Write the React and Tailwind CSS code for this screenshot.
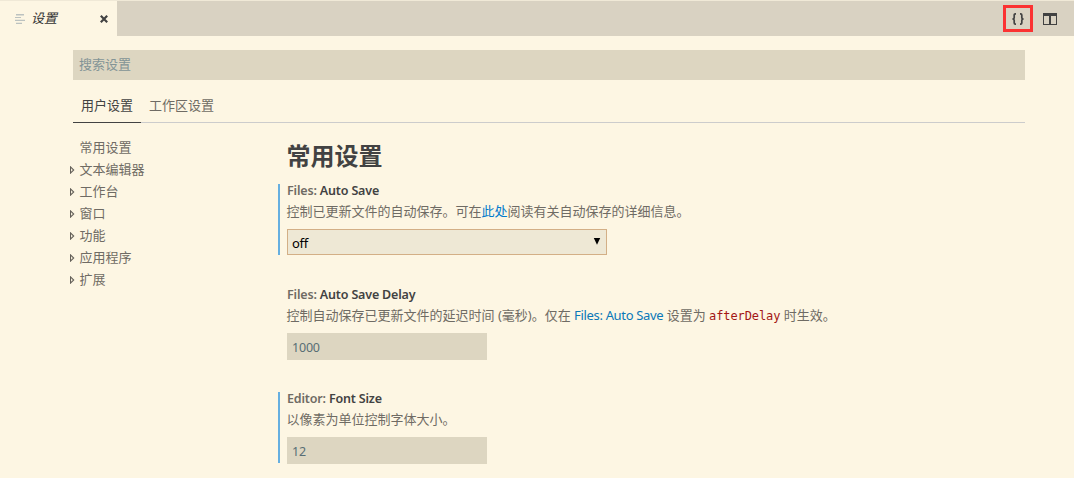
const latin = "font-['Noto_Sans','Noto_Sans_CJK_SC',sans-serif]";

function Tree() {
  const items = ['常用设置', '文本编辑器', '工作台', '窗口', '功能', '应用程序', '扩展'];
  return (
    <ul className="mt-[13px] w-[205px] shrink-0 text-[13px] leading-[22px] text-[#6f6b64]">
      {items.map((t, i) => (
        <li key={t} className="flex h-[22px] items-center">
          <span className="flex w-[6.5px] shrink-0 -translate-x-[3px] translate-y-[1px]">
            {i > 0 && (
              <svg width="5" height="8" viewBox="0 0 5 8" className="shrink-0" fill="none" stroke="#646059" strokeWidth="1.1">
                <path d="M0.5 0.9 L3.7 4 L0.5 7.1 Z" />
              </svg>
            )}
          </span>
          {t}
        </li>
      ))}
    </ul>
  );
}

function Setting({ group, name, modified, className, children }) {
  return (
    <section className={'flex h-[71px] ' + className}>
      <div className={'w-[2px] shrink-0 ' + (modified ? 'bg-[#66afe0]' : '')} />
      <div className="ml-[7px] text-[13px] text-[#6f6b64]">
        <h2 className="h-[17px] whitespace-nowrap text-[12.5px] leading-[14px] font-semibold tracking-[-0.17px]">
          {group}: <span className="text-[#424242]">{name}</span>
        </h2>
        {children}
      </div>
    </section>
  );
}

function Description({ children }) {
  return <p className="mb-[8px] -ml-[0.5px] h-[20px] whitespace-nowrap leading-[20px]">{children}</p>;
}

function NumberBox({ value }) {
  return (
    <div className="h-[27px] w-[200px] bg-[#ddd6c1] pl-[5px] text-[12.5px] leading-[29px] tracking-[-0.2px] text-[#586e75]">
      {value}
    </div>
  );
}

export default function App() {
  return (
    <div className={'h-[478px] w-[1074px] overflow-hidden bg-[#fdf6e3] ' + latin}>
      <header className="flex h-[36px] border-t border-[#f0e9d7] bg-[#d9d2c2]">
        <div className="flex w-[117px] items-center bg-[#fdf6e3] pl-[15px]">
          <svg width="10" height="10" viewBox="0 0 10 10" className="shrink-0" fill="#bcc2c0">
            <path d="M1 0h8v1.4H1zM0 2.9h6v1.2H0zM0 5.8h10v1.3H0zM1 8.7h6v1.3H1z" />
          </svg>
          <span className="ml-[6px] text-[13px] italic text-[#333333]">设置</span>
          <svg width="8" height="8" viewBox="0 0 8 8" className="ml-[43px] shrink-0" stroke="#424242" strokeWidth="2.2">
            <path d="M0.8 0.8L7.2 7.2M7.2 0.8L0.8 7.2" />
          </svg>
        </div>
        <div className="ml-auto flex items-start pt-[4px] pr-[17px]">
          <div className="flex h-[27px] w-[30px] items-center justify-center border-3 border-[#fb3232]">
            <svg width="12" height="12" viewBox="0 0 12 12" fill="none" stroke="#424242" strokeWidth="1.7">
              <path d="M4 0.9H3.4Q2.2 0.9 2.2 2.1V4.4Q2.2 6 0.4 6Q2.2 6 2.2 7.6V9.9Q2.2 11.1 3.4 11.1H4M8 0.9H8.6Q9.8 0.9 9.8 2.1V4.4Q9.8 6 11.6 6Q9.8 6 9.8 7.6V9.9Q9.8 11.1 8.6 11.1H8" />
            </svg>
          </div>
          <svg width="14" height="12" viewBox="0 0 14 12" className="mt-[8px] ml-[10px]" fill="#424242" fillRule="evenodd">
            <path d="M0 0H14V12H0ZM1 3V11H6V3ZM8 3V11H13V3Z" />
          </svg>
        </div>
      </header>

      <main className="mx-[73px] w-[952px] pt-[14px]">
        <div className="h-[30px] bg-[#ddd6c1] pl-[6px] text-[13px] leading-[29px] text-[#839496]">搜索设置</div>
        <nav className="mt-[10px] flex h-[33px] border-b border-[#cccccc] text-[13px] leading-[30px] text-[#6f6b64]">
          <div className="h-[33px] w-[68px] border-b border-[#424242] pl-[8px] text-[#424242]">用户设置</div>
          <div className="pl-[8px]">工作区设置</div>
        </nav>

        <div className="flex">
          <Tree />
          <div className="min-w-0 flex-1">
            <h1 className="mt-[15px] mb-[10px] ml-[8.5px] h-[36px] text-[24px] leading-[36px] font-bold text-[#424242]">常用设置</h1>
            <Setting group="Files" name="Auto Save" modified className="">
              <Description>
                控制已更新文件的自动保存。可在<a className="text-[#007acc]">此处</a>阅读有关自动保存的详细信息。
              </Description>
              <div className="flex h-[26px] w-[320px] items-center justify-between border border-[#d3af86] bg-[#eee8d5] pr-[5px] pl-[4px] text-black">
                <span className="pt-[4px] tracking-[-0.3px]">off</span>
                <svg width="8" height="7" viewBox="0 0 8 7" className="mb-[2px]">
                  <path d="M0.8 0H7.2L4 6.8Z" />
                </svg>
              </div>
            </Setting>
            <Setting group="Files" name="Auto Save Delay" className="mt-[33px]">
              <Description>
                控制自动保存已更新文件的延迟时间 (毫秒)。仅在{' '}
                <a className="tracking-[-0.33px] text-[#0a78b8]">Files: Auto Save</a> 设置为{' '}
                <code className="font-['DejaVu_Sans_Mono',monospace] text-[12px] tracking-[-0.1px] text-[#a31515]">afterDelay</code> 时生效。
              </Description>
              <NumberBox value="1000" />
            </Setting>
            <Setting group="Editor" name="Font Size" modified className="mt-[33px]">
              <Description>以像素为单位控制字体大小。</Description>
              <NumberBox value="12" />
            </Setting>
          </div>
        </div>
      </main>
    </div>
  );
}
